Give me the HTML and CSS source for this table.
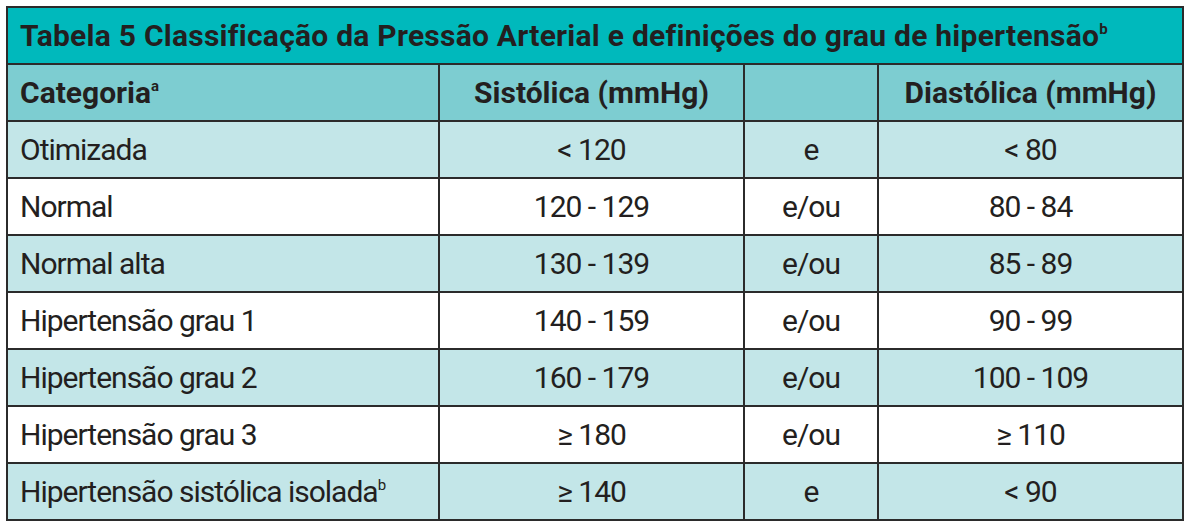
FILE: index.html
```html
<!DOCTYPE html>
<html lang="pt">
<head>
<meta charset="utf-8">
<link rel="stylesheet" href="styles.css">
</head>
<body>
<table class="bp">
  <colgroup>
    <col class="c1"><col class="c2"><col class="c3"><col class="c4">
  </colgroup>
  <thead>
    <tr class="title"><th colspan="4">Tabela 5 Classificação da Pressão Arterial e definições do grau de hipertensão<sup>b</sup></th></tr>
    <tr class="head">
      <th class="left">Categoria<sup>a</sup></th>
      <th>Sistólica (mmHg)</th>
      <th></th>
      <th>Diastólica (mmHg)</th>
    </tr>
  </thead>
  <tbody>
    <tr class="tint"><td class="left">Otimizada</td><td>&lt; 120</td><td>e</td><td>&lt; 80</td></tr>
    <tr><td class="left">Normal</td><td>120 - 129</td><td>e/ou</td><td>80 - 84</td></tr>
    <tr class="tint"><td class="left">Normal alta</td><td>130 - 139</td><td>e/ou</td><td>85 - 89</td></tr>
    <tr><td class="left">Hipertensão grau 1</td><td>140 - 159</td><td>e/ou</td><td>90 - 99</td></tr>
    <tr class="tint"><td class="left">Hipertensão grau 2</td><td>160 - 179</td><td>e/ou</td><td>100 - 109</td></tr>
    <tr><td class="left">Hipertensão grau 3</td><td>≥ 180</td><td>e/ou</td><td>≥ 110</td></tr>
    <tr class="tint"><td class="left">Hipertensão sistólica isolada<sup>b</sup></td><td>≥ 140</td><td>e</td><td>&lt; 90</td></tr>
  </tbody>
</table>
</body>
</html>
```
FILE: styles.css
```css
html, body { margin: 0; padding: 0; background: #ffffff; }
body { padding: 6px 0 0 6px; }
.bp {
  border-collapse: collapse;
  table-layout: fixed;
  width: 1176px;
  font-family: "Roboto", "Liberation Sans", sans-serif;
  color: #231f20;
}
.c1 { width: 432px; }
.c2 { width: 305px; }
.c3 { width: 134px; }
.c4 { width: 305px; }
.bp th, .bp td {
  border: 2px solid #2b2b2b;
  height: 57px;
  padding: 0 12px;
  text-align: center;
  vertical-align: middle;
  white-space: nowrap;
  box-sizing: border-box;
}
.bp td { font-size: 30px; font-weight: 400; letter-spacing: -1px; }
.bp th { font-size: 30px; font-weight: 700; letter-spacing: 0; }
.bp .left { text-align: left; }
.title th {
  background: #00b9bc;
  text-align: left;
  font-size: 30px;
  letter-spacing: 0.25px;
}
.head th { background: #7dcdd1; }
.tint td { background: #c3e6e8; }
sup { font-size: 0.5em; vertical-align: 0.8em; line-height: 0; letter-spacing: 0; }
```
